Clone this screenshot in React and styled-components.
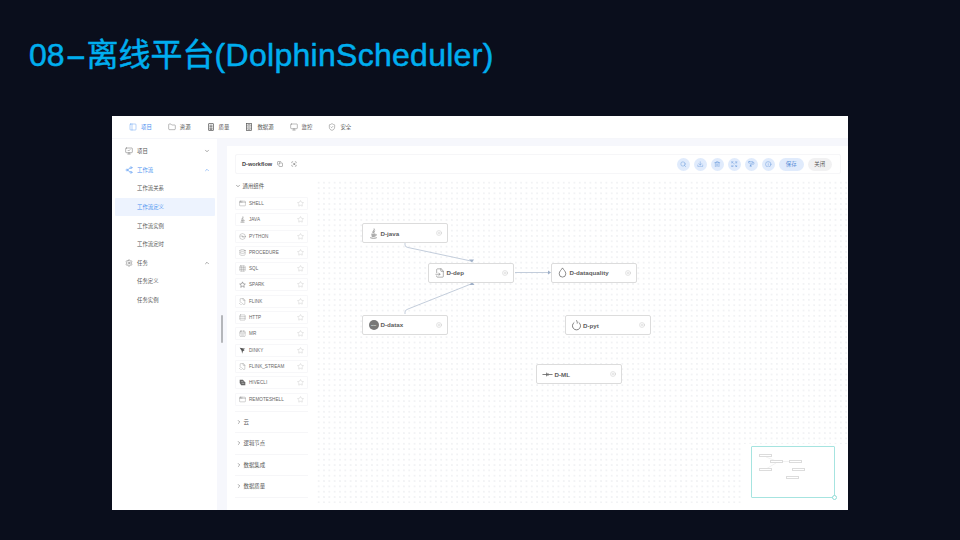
import React from "react";
import styled, { createGlobalStyle } from "styled-components";
import {
  PanelLeft, Folder, MonitorCheck, Monitor, ShieldCheck, Share2, ChevronDown, ChevronUp,
  ChevronRight, Settings, Search, Download, Trash2, Expand, PaintRoller, Info, Star, AppWindow, Disc3,
  Database, Grid3x3, FileCode2, Rows3, CalendarDays, PlusCircle, FileInput, Copy, ScanSearch,
} from "lucide-react";

const Global = createGlobalStyle`
  html, body { margin: 0; padding: 0; background: #0a0e1c; }
  * { box-sizing: border-box; }
  body { font-family: "Liberation Sans", "Noto Sans CJK SC", sans-serif; }
`;

const Slide = styled.div`
  width: 960px;
  height: 540px;
  background: #0a0e1c;
  display: flex;
  flex-direction: column;
  overflow: hidden;
`;

const Heading = styled.h1`
  margin: 0;
  height: 116px;
  padding: 36px 0 0 29px;
  font-size: 32px;
  line-height: 38px;
  font-weight: 400;
  color: #00aeef;
  -webkit-text-stroke: 0.5px #00aeef;
`;

const WideDash = styled.span`
  display: inline-block;
  width: 22px;
  text-align: center;
  transform: scaleX(2);
`;

const Latin = styled.span`
  letter-spacing: 0.28px;
`;

const Shot = styled.div`
  width: 736px;
  height: 394px;
  margin-left: 112px;
  background: #fff;
  display: flex;
  flex-direction: column;
  overflow: hidden;
  color: #555;
`;

const TopNav = styled.div`
  height: 23px;
  flex: none;
  display: flex;
  align-items: center;
  padding-left: 17px;
  gap: 16px;
  border-bottom: 1px solid #f5f6fa;
`;

const NavItem = styled.div`
  display: flex;
  align-items: center;
  gap: 4px;
  font-size: 5.4px;
  color: ${(p) => (p.$active ? "#4a90f0" : "#555")};
`;

const Body = styled.div`
  flex: 1;
  display: flex;
  min-height: 0;
`;

const Side = styled.div`
  width: 105px;
  flex: none;
  padding-top: 3px;
  padding-left: 3px;
`;

const SideRow = styled.div`
  height: 18.6px;
  width: 100px;
  display: flex;
  align-items: center;
  gap: 4px;
  padding-left: ${(p) => (p.$sub ? "22px" : "10px")};
  padding-right: 5px;
  font-size: 5.4px;
  border-radius: 1px;
  color: ${(p) => (p.$active ? "#4a90f0" : "#555")};
  background: ${(p) => (p.$selected ? "#edf3fe" : "transparent")};
`;

const Grow = styled.span`
  flex: 1;
`;

const Gutter = styled.div`
  width: 10px;
  flex: none;
  background: #f6f7fc;
  display: flex;
  justify-content: center;
  padding-top: 176px;
`;

const ScrollThumb = styled.div`
  width: 2px;
  height: 28px;
  background: #b4b6ba;
  border-radius: 1px;
`;

const Main = styled.div`
  flex: 1;
  background: #f6f7fc;
  padding-top: 7px;
  display: flex;
  min-width: 0;
`;

const Panel = styled.div`
  flex: 1;
  background: #fff;
  padding: 8px 7px 0 8px;
  display: flex;
  flex-direction: column;
  min-width: 0;
  position: relative;
`;

const Toolbar = styled.div`
  height: 20px;
  flex: none;
  display: flex;
  align-items: center;
  padding: 0 8px 0 6px;
  border: 1px solid #f6f6f8;
  border-radius: 2px;
  gap: 4px;
`;

const FlowName = styled.span`
  font-size: 5.6px;
  font-weight: 700;
  color: #444;
  margin-right: 1px;
`;

const MiniIcon = styled.span`
  display: flex;
  color: #777;
  margin-right: 4px;
`;

const RoundBtn = styled.div`
  width: 13px;
  height: 13px;
  border-radius: 50%;
  background: #e0ebfc;
  color: #5a8fd8;
  display: flex;
  align-items: center;
  justify-content: center;
`;

const Pill = styled.div`
  width: 24.5px;
  height: 13px;
  border-radius: 7px;
  background: ${(p) => (p.$gray ? "#f1f1f2" : "#e0ebfc")};
  color: ${(p) => (p.$gray ? "#555" : "#5a8fd8")};
  font-size: 5.4px;
  display: flex;
  align-items: center;
  justify-content: center;
`;

const Work = styled.div`
  flex: 1;
  display: flex;
  min-height: 0;
`;

const Palette = styled.div`
  width: 73px;
  flex: none;
  padding-top: 4px;
  margin-right: 8px;
`;

const GroupHead = styled.div`
  height: 15px;
  margin-bottom: 4px;
  display: flex;
  align-items: center;
  gap: 1.5px;
  font-size: 5.4px;
  color: #555;
`;

const Tile = styled.div`
  height: 13px;
  margin-bottom: 3.3px;
  display: flex;
  align-items: center;
  gap: 3.5px;
  padding: 0 3px 0 2.5px;
  border: 1px solid #f7f7f9;
  border-radius: 1px;
  font-size: 4.6px;
  color: #666;
  letter-spacing: 0.05px;
`;

const Closed = styled.div`
  height: 21.5px;
  display: flex;
  align-items: center;
  gap: 1.5px;
  padding-left: 1px;
  border-top: 1px solid #f6f6f8;
  font-size: 5.4px;
  color: #555;
`;

const ClosedList = styled.div`
  margin-top: 5px;
  border-bottom: 1px solid #f6f6f8;
`;

const Canvas = styled.div`
  flex: 1;
  position: relative;
  margin-top: 6px;
  margin-right: -7px;
  margin-bottom: 7px;
  background-image: radial-gradient(circle, #e4e6ea 0.55px, transparent 0.7px);
  background-size: 5.33px 5.33px;
`;

const Edges = styled.svg`
  position: absolute;
  left: 0;
  top: 0;
  overflow: visible;
`;

const Node = styled.div`
  position: absolute;
  width: 86px;
  height: 20px;
  background: #fff;
  border: 1px solid #dcdcdc;
  border-radius: 2px;
  display: flex;
  align-items: center;
  gap: 1.5px;
  padding: 0 5px 0 5px;
  font-size: 6.2px;
  font-weight: 700;
  color: #5c5c5c;
`;

const NodeIcon = styled.span`
  width: 11px;
  display: flex;
  justify-content: center;
  color: #666;
`;

const DataxBadge = styled.span`
  width: 10px;
  height: 10px;
  border-radius: 50%;
  background: #777;
  color: #ddd;
  font-size: 2px;
  display: flex;
  align-items: center;
  justify-content: center;
`;

const MapMask = styled.div`
  position: absolute;
  right: 0;
  bottom: 0;
  width: 105px;
  height: 59px;
  background: #fff;
`;

const MiniMap = styled.div`
  position: absolute;
  left: 8px;
  top: 2px;
  width: 84px;
  height: 51.5px;
  border: 1.5px solid #a6e4e0;
  border-radius: 1px;
`;

const Handle = styled.span`
  position: absolute;
  right: -3px;
  bottom: -3px;
  width: 5px;
  height: 5px;
  border-radius: 50%;
  background: #fff;
  border: 1px solid #8fdcd6;
`;

const MapNode = styled.span`
  position: absolute;
  width: 13px;
  height: 3px;
  border: 0.5px solid #dcdcdc;
  background: #fff;
`;

const TallFile = ({ size = 8 }) => (
  <svg width={size} height={size} viewBox="0 0 8 8" fill="none" stroke="currentColor" strokeWidth="0.7">
    <rect x="1.5" y="0.5" width="5" height="7" rx="0.5" />
    <path d="M2.5 2.2H5.5M2.5 3.6H5.5" />
    <rect x="3" y="5" width="2" height="1.3" />
  </svg>
);

const TallServer = ({ size = 8 }) => (
  <svg width={size} height={size} viewBox="0 0 8 8" fill="none" stroke="currentColor" strokeWidth="0.7">
    <rect x="1.5" y="0.5" width="5" height="7" />
    <path d="M1.5 2.8H6.5M1.5 5.2H6.5M2.6 1.6H5.4M2.6 4H5.4M2.6 6.4H5.4" strokeWidth="0.5" />
  </svg>
);

const JavaMark = ({ size = 10 }) => (
  <svg width={size} height={size} viewBox="0 0 10 10" fill="none" stroke="currentColor" strokeWidth="0.6">
    <path d="M5.5 0.5C6.5 2 3.6 3 4.6 4.6M6.5 2.4C5.4 3 5 3.6 5.6 4.8" />
    <path d="M3 5.6H6.6M3.2 6.6H6.4M3.4 7.6H6.2M6.8 5.8C8 5.6 8 7 6.4 7.2" />
    <path d="M2 8.8C4 9.5 6.2 9.5 8 8.8" />
  </svg>
);

const SparkStar = ({ size = 7 }) => (
  <svg width={size} height={size} viewBox="0 0 8 8" fill="none" stroke="currentColor" strokeWidth="0.6">
    <path d="M4 1L5 3.2L7.2 3.5L5.5 5L6 7.2L4 6L2 7.2L2.5 5L0.8 3.5L3 3.2Z" />
  </svg>
);

const DinkyMark = ({ size = 7 }) => (
  <svg width={size} height={size} viewBox="0 0 8 8" fill="#555">
    <path d="M0.8 0.8L7.2 2L5 3.2L6.4 3.6L4.4 4.8L3.6 7.6L3 4.2Z" />
  </svg>
);

const HiveMark = ({ size = 7 }) => (
  <svg width={size} height={size} viewBox="0 0 8 8" fill="#666">
    <path d="M0.8 0.8H4.5L7.2 4V7.2H2.5L0.8 4.5Z" />
    <path d="M2.5 3H5M3 5H6" stroke="#ddd" strokeWidth="0.6" />
  </svg>
);

const DropOutline = ({ size = 11 }) => (
  <svg width={size} height={size} viewBox="0 0 12 12" fill="none" stroke="currentColor" strokeWidth="0.8">
    <path d="M6 1C7 3 9.6 4.6 9.6 7.4A3.6 3.6 0 0 1 2.4 7.4C2.4 4.6 5 3 6 1Z" />
  </svg>
);

const RingFlame = ({ size = 12 }) => (
  <svg width={size} height={size} viewBox="0 0 12 12" fill="none" stroke="currentColor" strokeWidth="0.9">
    <path d="M3.6 3.2A4.4 4.4 0 1 0 8.4 3.2" />
    <path d="M6 0.8C6.4 2.2 7.2 3 6.8 4.4" />
  </svg>
);

const LineMark = ({ size = 11 }) => (
  <svg width={size} height={size} viewBox="0 0 12 12" fill="none" stroke="currentColor" strokeWidth="0.9">
    <path d="M0.5 6H11.5M5 4V8M6.5 4.4V7.6" />
  </svg>
);

const nav = [
  ["项目", PanelLeft, true],
  ["资源", Folder],
  ["质量", TallFile],
  ["数据源", TallServer],
  ["监控", Monitor],
  ["安全", ShieldCheck],
];

const tiles = [
  ["SHELL", AppWindow],
  ["JAVA", JavaMark],
  ["PYTHON", Disc3],
  ["PROCEDURE", Database],
  ["SQL", Grid3x3],
  ["SPARK", SparkStar],
  ["FLINK", FileCode2],
  ["HTTP", Rows3],
  ["MR", CalendarDays],
  ["DINKY", DinkyMark],
  ["FLINK_STREAM", FileCode2],
  ["HIVECLI", HiveMark],
  ["REMOTESHELL", AppWindow],
];

const nodes = [
  { name: "D-java", x: 46, y: 43, icon: <JavaMark size={11} /> },
  { name: "D-dep", x: 112, y: 82.5, icon: <FileInput size={10} strokeWidth={1.2} /> },
  { name: "D-dataquality", x: 235, y: 82.5, icon: <DropOutline /> },
  { name: "D-datax", x: 46, y: 134.5, icon: <DataxBadge>datax</DataxBadge> },
  { name: "D-pyt", x: 248.5, y: 135, icon: <RingFlame /> },
  { name: "D-ML", x: 220, y: 184, icon: <LineMark /> },
];

const mapNodes = [
  [7, 7], [18, 13], [37, 13], [7, 21], [40, 21], [34, 29],
];

const toolIcons = [Search, Download, Trash2, Expand, PaintRoller, Info];

export default function App() {
  return (
    <Slide>
      <Global />
      <Heading>
        08<WideDash>-</WideDash>离线平台<Latin>(DolphinScheduler)</Latin>
      </Heading>
      <Shot>
        <TopNav>
          {nav.map(([label, Icon, active]) => (
            <NavItem key={label} $active={active}>
              <Icon size={8} strokeWidth={1.2} />
              {label}
            </NavItem>
          ))}
        </TopNav>
        <Body>
          <Side>
            <SideRow>
              <MonitorCheck size={8} strokeWidth={1.3} />项目<Grow /><ChevronDown size={6} />
            </SideRow>
            <SideRow $active>
              <Share2 size={8} strokeWidth={1.5} />工作流<Grow /><ChevronUp size={6} />
            </SideRow>
            <SideRow $sub>工作流关系</SideRow>
            <SideRow $sub $active $selected>工作流定义</SideRow>
            <SideRow $sub>工作流实例</SideRow>
            <SideRow $sub>工作流定时</SideRow>
            <SideRow>
              <Settings size={8} strokeWidth={1.3} />任务<Grow /><ChevronUp size={6} />
            </SideRow>
            <SideRow $sub>任务定义</SideRow>
            <SideRow $sub>任务实例</SideRow>
          </Side>
          <Gutter><ScrollThumb /></Gutter>
          <Main>
            <Panel>
              <Toolbar>
                <FlowName>D-workflow</FlowName>
                <MiniIcon><Copy size={6} /></MiniIcon>
                <MiniIcon><ScanSearch size={6} /></MiniIcon>
                <Grow />
                {toolIcons.map((Icon, i) => (
                  <RoundBtn key={i}><Icon size={6.5} strokeWidth={1.5} /></RoundBtn>
                ))}
                <Pill>保存</Pill>
                <Pill $gray>关闭</Pill>
              </Toolbar>
              <Work>
                <Palette>
                  <GroupHead><ChevronDown size={6} />通用组件</GroupHead>
                  <div>
                    {tiles.map(([label, Icon]) => (
                      <Tile key={label}>
                        <Icon size={7} strokeWidth={1} />
                        {label}
                        <Grow />
                        <Star size={7} strokeWidth={1} color="#aaa" />
                      </Tile>
                    ))}
                  </div>
                  <ClosedList>
                    {["云", "逻辑节点", "数据集成", "数据质量"].map((label) => (
                      <Closed key={label}><ChevronRight size={6} />{label}</Closed>
                    ))}
                  </ClosedList>
                </Palette>
                <Canvas>
                  <Edges width="10" height="10">
                    <g fill="none" stroke="#b4c0d2" strokeWidth="0.8">
                      <path d="M89 63 V65 Q89 67 92 67.5 L155 81" />
                      <path d="M89 134 V132 Q89 130 92 129 L155 104" />
                      <path d="M199 92.5 H234" />
                    </g>
                    <g fill="#9fb0c8">
                      <path d="M156 82.5 L153 79.5 L158 79.5Z" />
                      <path d="M156 102 L153.5 105 L158.5 105Z" />
                      <path d="M235 92.5 L232 90.5 L232 94.5Z" />
                    </g>
                  </Edges>
                  {nodes.map((n) => (
                    <Node key={n.name} style={{ left: n.x, top: n.y }}>
                      <NodeIcon>{n.icon}</NodeIcon>
                      {n.name}
                      <Grow />
                      <PlusCircle size={6} strokeWidth={1} color="#999" />
                    </Node>
                  ))}
                  <MapMask>
                    <MiniMap>
                      <Edges width="10" height="10">
                        <path d="M14 10 L24 14 M14 22 L24 16 M31 14.5 H37" fill="none" stroke="#e4e4e4" strokeWidth="0.5" />
                      </Edges>
                      {mapNodes.map(([x, y], i) => (
                        <MapNode key={i} style={{ left: x, top: y }} />
                      ))}
                      <Handle />
                    </MiniMap>
                  </MapMask>
                </Canvas>
              </Work>
            </Panel>
          </Main>
        </Body>
      </Shot>
    </Slide>
  );
}
